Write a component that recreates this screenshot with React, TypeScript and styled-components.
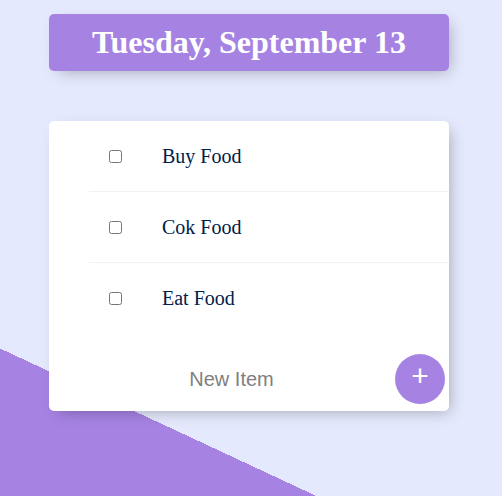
import React, { useState } from "react";
import styled, { createGlobalStyle } from "styled-components";

const GlobalStyle = createGlobalStyle`
  html {
    background: #e4e9fd linear-gradient(25deg, #a683e3 50%, #e4e9fd 50%) no-repeat 0 0 / 100% 931px;
    min-height: 100%;
  }
  body {
    margin: 0;
    font-family: "Liberation Serif", "Times New Roman", serif;
  }
`

const Page = styled.div`
  padding: 14px 0 40px 49px;
`
const Box = styled.div`
  width: 400px;
  background: #fff;
  border-radius: 5px;
  box-shadow: 5px 5px 15px -5px rgba(0, 0, 0, 0.3);
  margin-bottom: 50px;
`
const Heading = styled(Box)`
  background: #a683e3;
  text-align: center;
`
const Title = styled.h1`
  margin: 0;
  padding: 10px;
  color: #fff;
  font-size: 32px;
  font-weight: bold;
  font-family: "Liberation Serif", "Times New Roman", serif;
`
const List = styled.div`
  padding-left: 40px;
`
const Item = styled.label`
  min-height: 70px;
  display: flex;
  align-items: center;
  border-bottom: 1px solid #f1f1f1;
  &:last-child {
    border-bottom: 0;
  }
`
const Check = styled.input`
  margin: 20px;
  width: 13px;
  height: 13px;
`
const ItemText = styled.p<{ $done: boolean }>`
  margin: 0;
  padding: 20px;
  font-size: 20px;
  font-weight: 200;
  color: #00204a;
  text-decoration: ${(p) => (p.$done ? "line-through" : "none")};
  text-decoration-color: #a683e3;
`
const Form = styled.form`
  display: flex;
  align-items: center;
  gap: 7px;
  padding: 14px 0 0 26px;
  height: 78px;
  box-sizing: border-box;
`
const TextInput = styled.input`
  width: 313px;
  height: 60px;
  padding: 0;
  border: none;
  background: transparent;
  text-align: center;
  font-family: "Liberation Sans", Arial, sans-serif;
  font-size: 20px;
  font-weight: 200;
  &::placeholder {
    color: grey;
    opacity: 1;
  }
  &:focus {
    outline: none;
    box-shadow: inset 0 -3px 0 0 #a683e3;
  }
`
const AddButton = styled.button`
  width: 50px;
  height: 50px;
  border-radius: 50%;
  border: 0;
  padding: 0 0 6px;
  background: #a683e3;
  color: #fff;
  font-family: "Liberation Sans", Arial, sans-serif;
  font-size: 30px;
  line-height: 1;
  cursor: pointer;
`

const initialItems = ["Buy Food", "Cok Food", "Eat Food"];

const App: React.FC = () => {
  const [items, setItems] = useState(initialItems.map((name) => ({ name, done: false })));
  const [text, setText] = useState("");

  const onToggle = (index: number) => {
    setItems(items.map((item, i) => (i === index ? { ...item, done: !item.done } : item)));
  }

  const onSubmit = (e: React.FormEvent) => {
    e.preventDefault();
    if (!text.trim()) return;
    setItems([...items, { name: text, done: false }]);
    setText("");
  }

  return (
    <>
      <GlobalStyle />
      <Page>
        <Heading>
          <Title>Tuesday, September 13</Title>
        </Heading>
        <Box>
          <List>
            {items.map((item, index) => (
              <Item key={index}>
                <Check type="checkbox" checked={item.done} onChange={() => onToggle(index)} />
                <ItemText $done={item.done}>{item.name}</ItemText>
              </Item>
            ))}
          </List>
          <Form onSubmit={onSubmit}>
            <TextInput
              type="text"
              placeholder="New Item"
              autoComplete="off"
              value={text}
              onChange={(e) => setText(e.target.value)}
            />
            <AddButton type="submit">+</AddButton>
          </Form>
        </Box>
      </Page>
    </>
  );
}
export default App;
